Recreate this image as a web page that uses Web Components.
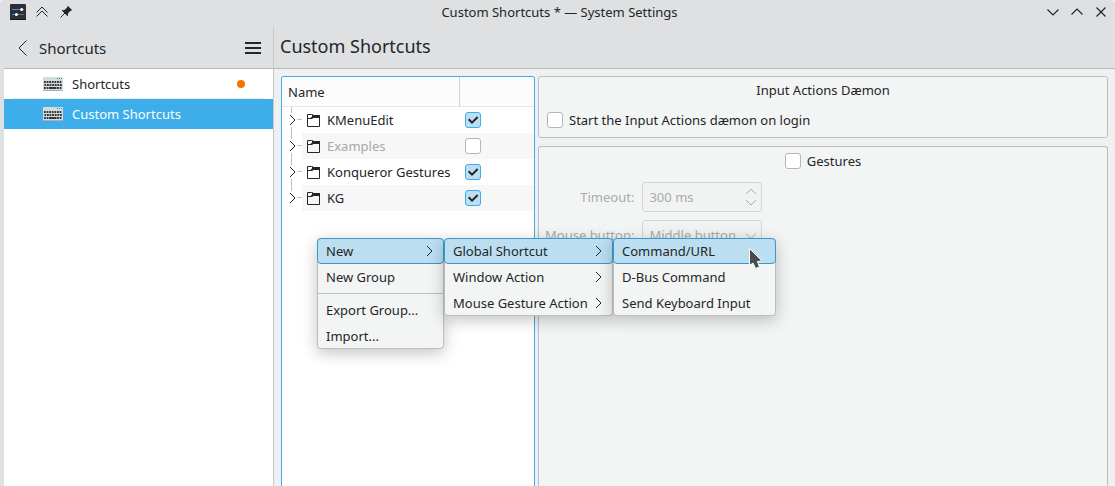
<!DOCTYPE html>
<html lang="en">
<head>
<meta charset="utf-8">
<title>Custom Shortcuts — System Settings</title>
<style>
  html, body { height: 100%; }
  body { margin: 0; overflow: hidden; background: #f4f4f4; color: #232629; font: 13px/18px "Noto Sans", sans-serif; }
</style>
</head>
<body>
<settings-window>
  <title-bar slot="title">Custom Shortcuts * — System Settings</title-bar>
  <side-bar slot="side" heading="Shortcuts">
    <side-item changed>Shortcuts</side-item>
    <side-item current>Custom Shortcuts</side-item>
  </side-bar>
  <span slot="heading">Custom Shortcuts</span>
  <shortcut-tree slot="tree"></shortcut-tree>
  <group-box slot="panels">
    <span slot="legend">Input Actions Dæmon</span>
    <check-box label="Start the Input Actions dæmon on login"></check-box>
  </group-box>
  <group-box slot="panels" fill>
    <check-box slot="legend" label="Gestures"></check-box>
    <gesture-form></gesture-form>
  </group-box>
</settings-window>
<context-menu style="--x:317px; --w:127px">
  <menu-item active submenu>New</menu-item>
  <menu-item>New Group</menu-item>
  <menu-rule></menu-rule>
  <menu-item>Export Group...</menu-item>
  <menu-item>Import...</menu-item>
</context-menu>
<context-menu style="--x:444px; --w:169px">
  <menu-item active submenu>Global Shortcut</menu-item>
  <menu-item submenu>Window Action</menu-item>
  <menu-item submenu>Mouse Gesture Action</menu-item>
</context-menu>
<context-menu style="--x:613px; --w:163px">
  <menu-item active>Command/URL</menu-item>
  <menu-item>D-Bus Command</menu-item>
  <menu-item>Send Keyboard Input</menu-item>
</context-menu>
<mouse-pointer></mouse-pointer>

<script>
const reset = `
  :host, *, *::before { box-sizing: border-box; }
  :host([hidden]) { display: none; }
  button { appearance: none; border: 0; margin: 0; padding: 0; background: none; font: inherit; color: inherit; display: flex; align-items: center; }
  svg { display: block; flex: none; fill: none; stroke: currentColor; }
`;
const checkStyle = `
  input[type=checkbox] { appearance: none; flex: none; display: block; width: 16px; height: 16px; margin: 0; border: 1px solid #b4b6b8; border-radius: 3px; background: #fff; }
  input[type=checkbox]:checked { border-color: #3daee9; background: #bbdef1 url("data:image/svg+xml,%3Csvg xmlns='http://www.w3.org/2000/svg' viewBox='0 0 14 14'%3E%3Cpath d='M2.7 6.3L6 9.6L11.7 4' fill='none' stroke='%23232629' stroke-width='2'/%3E%3C/svg%3E") center / 14px 14px no-repeat; }
`;
function define(name, css, html) {
  customElements.define(name, class extends HTMLElement {
    constructor() {
      super();
      const root = this.attachShadow({ mode: 'open' });
      const text = typeof html === 'function' ? html(this) : html;
      root.innerHTML = `<style>${reset}${css}</style>${text}`;
    }
  });
}

define('settings-window', `
  :host { display: grid; grid-template: auto auto 1fr / 269px 1fr; height: 100vh; padding-left: 4px; background: #dee0e2; border-radius: 4px 4px 0 0; overflow: hidden; }
  slot[name=title] { grid-column: 1 / -1; display: block; }
  .side { grid-row: 2 / 4; display: grid; }
  h1 { margin: 0; padding: 6px 6px 9px; height: 42px; font-size: 18px; line-height: 26px; font-weight: 400; border-left: 1px solid #c6c8ca; border-bottom: 1px solid #b7babd; }
  main { display: grid; grid-template-columns: 254px 1fr; gap: 3px; padding: 7px 7px 0; background: #eff0f1; border-left: 1px solid #c6c8ca; min-height: 0; }
  .panels { display: flex; flex-direction: column; gap: 8px; min-width: 0; }
  .tree { display: grid; }
`, `
  <slot name="title"></slot>
  <div class="side"><slot name="side"></slot></div>
  <h1><slot name="heading"></slot></h1>
  <main><div class="tree"><slot name="tree"></slot></div><div class="panels"><slot name="panels"></slot></div></main>
`);

define('title-bar', `
  :host { display: grid; grid-template-columns: 1fr auto 1fr; align-items: center; height: 27px; padding: 0 6px 3px; }
  div { display: flex; align-items: center; gap: 8px; }
  .end { justify-content: flex-end; }
`, `
  <div>
    <svg width="16" height="16" viewBox="0 0 16 16" stroke="none" aria-hidden="true">
      <rect width="16" height="16" rx="1" fill="#2b3036" stroke="none"/><path d="M0 15.5h16" stroke="#15181b"/>
      <path d="M2 5.5h9M2 10.5h4" stroke="#3a8fd0"/><path d="M12 5.5h2M7 10.5h7" stroke="#687078"/>
      <circle cx="11.7" cy="5.5" r="1.5" fill="#fff" stroke="none"/><circle cx="6.4" cy="10.5" r="1.5" fill="#fff" stroke="none"/>
    </svg>
    <button aria-label="Keep above"><svg width="16" height="16" viewBox="0 0 16 16"><path d="M2.5 8.5L8 3l5.500 5.500M2.500 12.500L8 7l5.500 5.500"/></svg></button>
    <button aria-label="Pin to all desktops"><svg width="16" height="16" viewBox="0 0 16 16"><path d="M10 2L14 6L13 7L12.500 6.800L10 9.500L9.800 12.500L3.500 6.200L6.500 6L9.200 3.500L9 3z" fill="currentColor" stroke="none"/><path d="M7 9L2.500 13.500"/></svg></button>
  </div>
  <slot></slot>
  <div class="end">
    <button aria-label="Minimize"><svg width="16" height="16" viewBox="0 0 16 16"><path d="M2.500 5.500L8 11L13.500 5.500" stroke-width="1.200"/></svg></button>
    <button aria-label="Maximize"><svg width="16" height="16" viewBox="0 0 16 16"><path d="M2.500 10.500L8 5L13.500 10.500" stroke-width="1.200"/></svg></button>
    <button aria-label="Close"><svg width="16" height="16" viewBox="0 0 16 16"><path d="M3.500 3.500L12.500 12.500M12.500 3.500L3.500 12.500" stroke-width="1.200"/></svg></button>
  </div>
`);

define('side-bar', `
  :host { display: flex; flex-direction: column; background: #fff; }
  header { display: flex; justify-content: space-between; align-items: center; height: 42px; padding: 0 12px 0 10px; font-size: 15px; line-height: 20px; background: #dee0e2; border-bottom: 1px solid #b7babd; }
  .back { gap: 8px; }
`, el => `
  <header>
    <button class="back"><svg width="17" height="18" viewBox="0 0 17 18"><path d="M12.500 1.500L5 9L12.500 16.500"/></svg>${el.getAttribute('heading')}</button>
    <button aria-label="Menu"><svg width="16" height="12" viewBox="0 0 16 12"><path d="M0 1h16M0 6h16M0 11h16" stroke-width="2"/></svg></button>
  </header>
  <nav><slot></slot></nav>
`);

define('side-item', `
  :host { display: block; }
  a { display: flex; align-items: center; gap: 9px; height: 30px; padding: 0 28px 0 39px; color: inherit; text-decoration: none; }
  :host([changed]) a::after { content: ""; margin-left: auto; width: 8px; height: 8px; border-radius: 4px; background: #f67400; }
  :host([changed]) { background: linear-gradient(#e9eaeb, #e9eaeb) 8px 29px / 253px 1px no-repeat; }
  :host([current]) { background: #3daee9; color: #fcfcfc; }
`, () => {
  const keys = [];
  for (let row = 0; row < 3; row++) for (let i = 0; i < 7; i++) {
    if (row === 2 && i > 1 && i < 5) continue;
    keys.push(`<rect x="${1 + i * 2.6 + (row === 1 ? .4 : 0)}" y="${4 + row * 3}" width="1.800" height="2"/>`);
  }
  return `<a href="#"><svg width="20" height="14" viewBox="0 0 20 14" aria-hidden="true"><rect width="20" height="14" fill="#d6dadc" stroke="none"/><path d="M0 13.500h20" stroke="#a9b0b3"/><path d="M14 1.500h1M16 1.500h1M18 1.500h1" stroke="#27ae60"/><g fill="#31363b" stroke="none">${keys.join('')}<rect x="6" y="10" width="7.500" height="2"/></g></svg><span><slot></slot></span></a>`;
});

const rows = [['KMenuEdit', true], ['Examples', false], ['Konqueror Gestures', true], ['KG', true]];
define('shortcut-tree', `
  :host { display: block; background: #fff; border: 1px solid #3daee9; border-bottom: 0; border-radius: 3px 3px 0 0; overflow: hidden; }
  ${checkStyle}
  table { width: 100%; border-collapse: collapse; table-layout: fixed; }
  col:last-child { width: 75px; }
  th, td { padding: 0; text-align: left; font-weight: 400; }
  th { height: 30px; padding: 0 6px 1px; background: #fcfcfc; box-shadow: inset 0 -1px #e6e7e8; }
  th + th { border-left: 1px solid #d0d2d4; }
  td { height: 26px; }
  tr:nth-child(even) td { background: #f7f7f7; }
  td:first-child { background: none !important; }
  .name { display: flex; align-items: center; height: 26px; }
  .name button { width: 20px; height: 26px; }
  .label { flex: 1; display: flex; align-items: center; gap: 7px; height: 26px; padding-left: 5px; white-space: nowrap; }
  tr:nth-child(even) .label { background: #f7f7f7; }
  .off span { color: #a6a8aa; }
  td:last-child { padding-left: 6px; }
`, `
  <table>
    <colgroup><col><col></colgroup>
    <thead><tr><th scope="col">Name</th><th scope="col" aria-label="Enabled"></th></tr></thead>
    <tbody>${rows.map(([name, on], i) => `
      <tr class="${on ? '' : 'off'}"><td><div class="name">
        <button aria-label="Expand ${name}"><svg width="20" height="26" viewBox="0 0 20 26"><path d="M9.500 0v6${i < 3 ? 'M9.500 20v6' : ''}M15 12.500h5" stroke="#bfc1c3"/><path d="M8 8l5 5l-5 5"/></svg></button>
        <div class="label"><svg width="13" height="13" viewBox="0 0 13 13"><path d="M.5 12.500V.500H4.500L6 1.500H12.500V12.500z"/><path d="M5 0L6.500 1H13V4H6.500L5 5H0V4H3.500L5 2.500z" fill="currentColor" stroke="none"/></svg><span>${name}</span></div>
      </div></td><td><input type="checkbox" aria-label="Enable ${name}" ${on ? 'checked' : ''}></td></tr>`).join('')}
    </tbody>
  </table>
`);

define('check-box', `
  :host { display: block; }
  ${checkStyle}
  label { display: inline-flex; align-items: center; gap: 6px; }
`, el => `<label><input type="checkbox">${el.getAttribute('label')}</label>`);

define('group-box', `
  :host { display: block; padding: 4px 6px 5px; background: #f3f5f5; border: 1px solid #bcbebf; border-radius: 3px; }
  :host([fill]) { flex: 1; padding-top: 5px; border-bottom: 0; border-radius: 3px 3px 0 0; }
  .legend { display: flex; justify-content: center; margin-bottom: 12px; }
  :host([fill]) .legend { margin-bottom: 9px; }
  .body { padding-left: 2px; }
  :host([fill]) .body { padding: 0; }
`, `<div class="legend"><slot name="legend"></slot></div><div class="body"><slot></slot></div>`);

define('gesture-form', `
  :host { display: grid; grid-template-columns: auto 120px; justify-content: start; align-items: center; gap: 8px; color: #a9abad; }
  label { text-align: right; }
  .field { display: grid; grid-template-columns: 1fr 20px; align-items: center; height: 30px; border: 1px solid #d2d4d5; border-radius: 3px; background: #f1f2f2; }
  input, select { grid-area: 1 / 1 / 2 / 3; appearance: none; width: 100%; height: 28px; margin: 0; border: 0; padding: 0 6px; background: none; font: inherit; color: #a9abad; opacity: 1; }
  svg { grid-area: 1 / 2; pointer-events: none; }
`, `
  <label for="timeout">Timeout:</label>
  <div class="field"><input id="timeout" type="text" value="300 ms" disabled><svg width="20" height="28" viewBox="0 0 20 28"><path d="M5 11L10 6L15 11M5 17L10 22L15 17"/></svg></div>
  <label for="button">Mouse button:</label>
  <div class="field"><select id="button" disabled><option>Middle button</option></select><svg width="20" height="28" viewBox="0 0 20 28"><path d="M5 12.500L10 17.500L15 12.500"/></svg></div>
`);

define('context-menu', `
  :host { position: absolute; top: 238px; left: var(--x); width: var(--w); background: #f3f5f5; border: 1px solid #bcbebf; border-top: 0; border-radius: 4px; box-shadow: 0 4px 16px rgba(0, 0, 0, .24); }
  div { margin-bottom: -1px; }
`, `<div role="menu"><slot></slot></div>`);

define('menu-item', `
  :host { display: block; }
  button { justify-content: space-between; width: 100%; height: 26px; padding: 0 8px; white-space: nowrap; }
  :host([active]) { margin: 0 -1px; }
  :host([active]) button { border: 1px solid #3b98cb; border-radius: 4px; background: #bbdef1; }
`, el => `<button role="menuitem"><slot></slot>${el.hasAttribute('submenu') ? '<svg width="10" height="12" viewBox="0 0 10 12"><path d="M2 1l5 5l-5 5"/></svg>' : ''}</button>`);

define('menu-rule', `
  :host { display: block; padding: 3px 0; }
  hr { margin: 0; border: 0; border-top: 1px solid #bcbebf; }
`, `<hr>`);

define('mouse-pointer', `
  :host { position: absolute; left: 747px; top: 246px; pointer-events: none; }
`, `<svg width="18" height="26" viewBox="0 0 18 26"><path d="M2.500 2.500V19.500L6 17L8.500 22.500L12.500 21L10.500 15.500L15 15z" fill="#4a4c4e" stroke="#fff"/></svg>`);
</script>
</body>
</html>
